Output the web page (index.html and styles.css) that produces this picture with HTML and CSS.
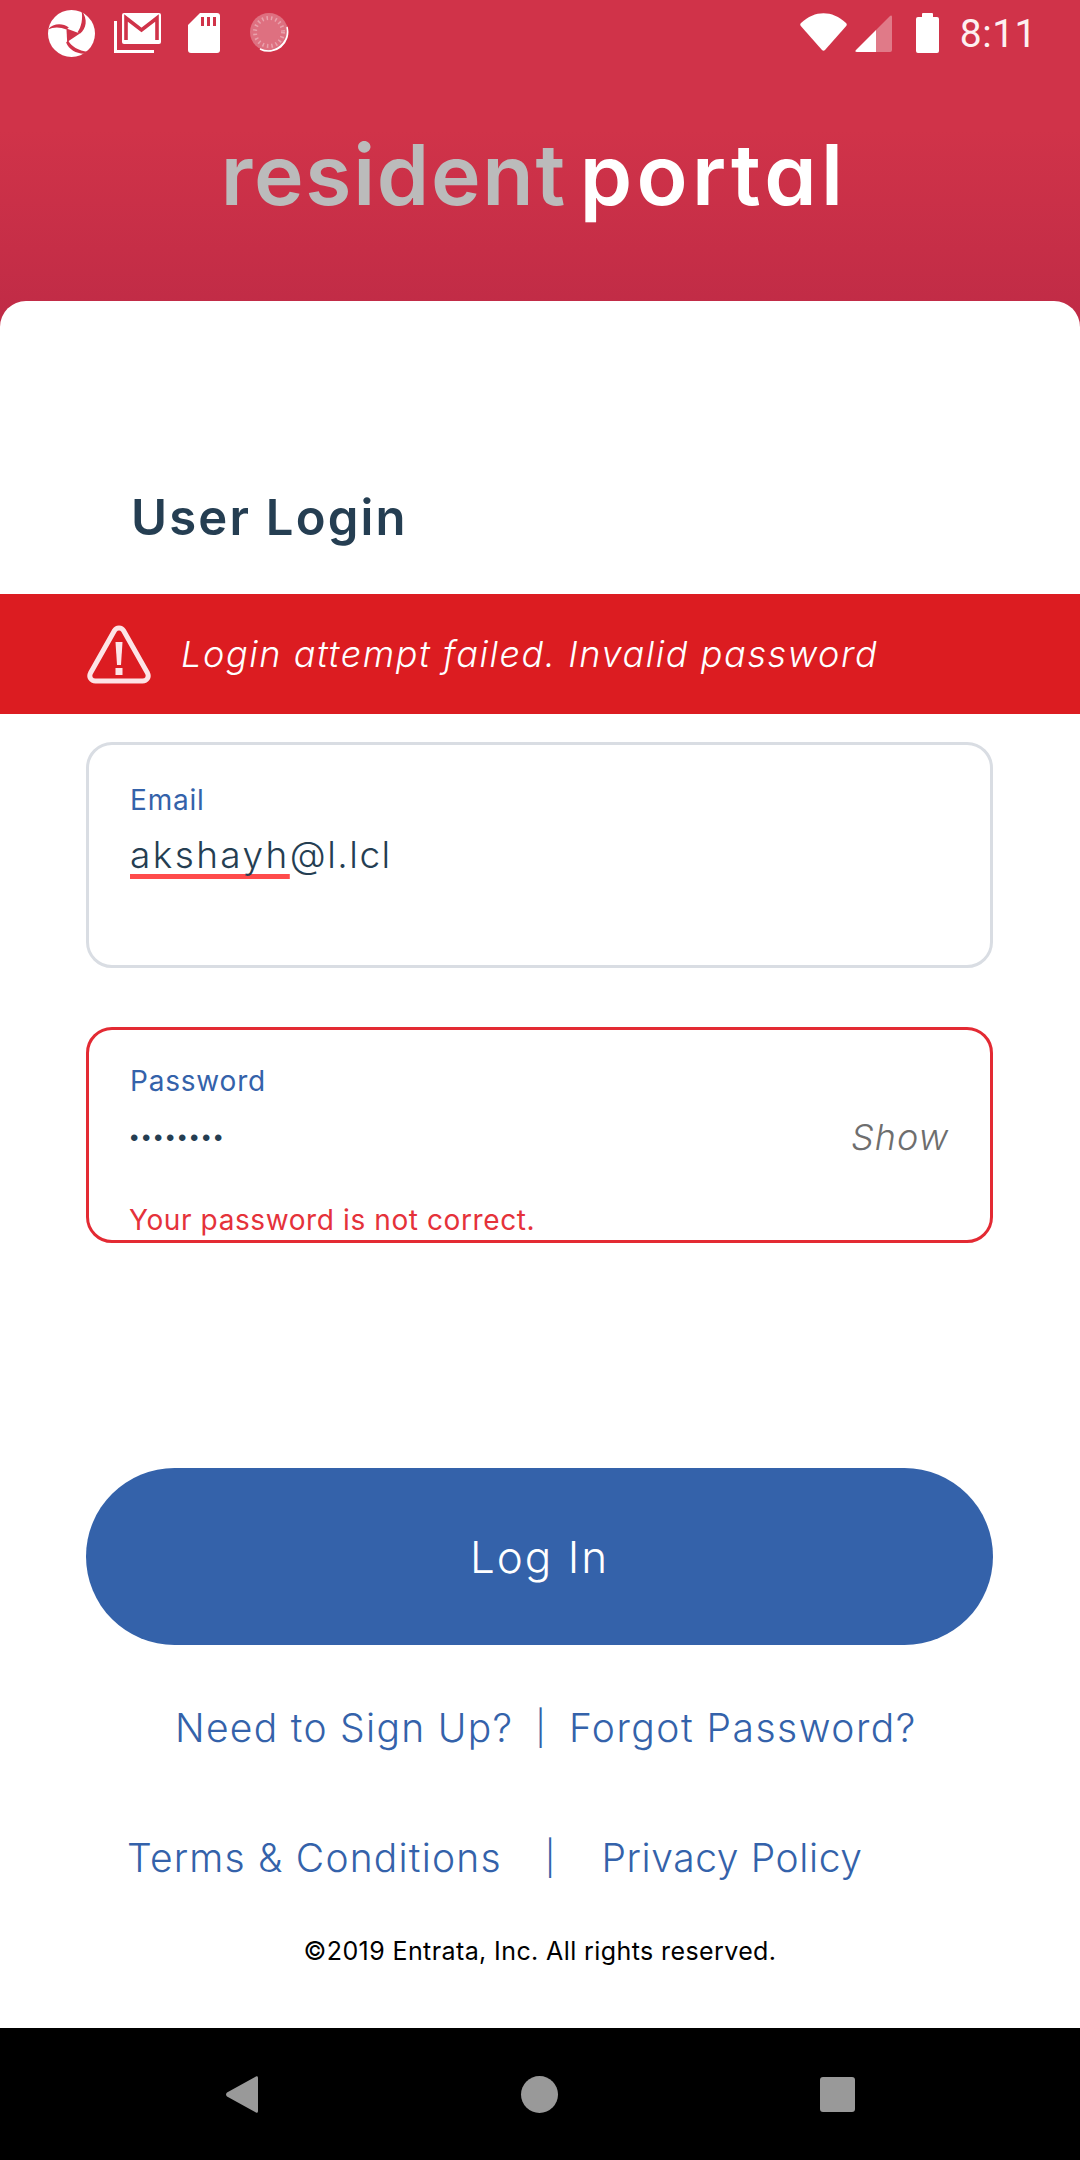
FILE: index.html
```html
<!DOCTYPE html>
<html lang="en">
<head>
<meta charset="utf-8">
<title>Resident Portal Login</title>
<link rel="stylesheet" href="styles.css">
</head>
<body>
<div class="app">
  <header class="top">
    <div class="status">
      <div class="status-left">
        <svg class="ic-swirl" viewBox="0 0 140 140"><circle cx="70" cy="70" r="70" fill="#fff"/><path fill="#d03349" d="M55 55L95 70L57 95Z"/><path fill="#d03349" d="M100 2C120 28 114 55 95 71L88 66C100 50 104 25 100 2Z"/><path fill="#d03349" d="M0 58C15 40 42 38 62 52L55 58C36 50 16 50 0 58Z"/><path fill="#d03349" d="M60 90C68 108 92 122 118 124L106 130C84 130 62 118 54 97Z"/></svg>
        <svg class="ic-gmail" viewBox="0 0 47 40"><path d="M1.5 8V38.5H40" fill="none" stroke="#fff" stroke-width="3"/><rect x="8" y="0" width="39" height="31" rx="2" fill="#fff"/><path d="M12 27V5L27.5 17L43 5V27" fill="none" stroke="#d03349" stroke-width="3.6"/></svg>
        <svg class="ic-sd" viewBox="0 0 32 40"><path d="M12 0H29a3 3 0 0 1 3 3V37a3 3 0 0 1-3 3H3a3 3 0 0 1-3-3V12Z" fill="#fff"/><path d="M13 4h3v9h-3zM19 4h3v9h-3zM25 4h3v9h-3z" fill="#d03349"/></svg>
        <svg class="ic-spin" viewBox="0 0 40 40"><circle cx="19" cy="19" r="19" fill="#fff" opacity=".3"/><circle cx="19" cy="19" r="14" fill="none" stroke="#fff" stroke-opacity=".35" stroke-width="4" stroke-dasharray="1.5 3"/><path d="M37 14A19 19 0 0 1 10 36A19.500 19.500 0 0 0 37 14Z" fill="#fff" stroke="#fff" stroke-width="1.500"/></svg>
      </div>
      <div class="status-right">
        <svg class="ic-wifi" viewBox="0 0 47 38"><path d="M1 10C15 -3 32 -3 46 10C47 11 47 12 46.200 13L25 37C24 38 23 38 22 37L.8 13C0 12 0 11 1 10Z" fill="#fff"/></svg>
        <svg class="ic-signal" viewBox="0 0 37 37"><path d="M21 15L35 1C36 0 37 .5 37 2V35a2 2 0 0 1-2 2H21Z" fill="#fff" opacity=".35"/><path d="M21 15V37H2C0 37 0 36 1 35Z" fill="#fff"/></svg>
        <svg class="ic-batt" viewBox="0 0 23 40"><path d="M6 4V1a1 1 0 0 1 1-1H16a1 1 0 0 1 1 1V4H21a2 2 0 0 1 2 2V38a2 2 0 0 1-2 2H2a2 2 0 0 1-2-2V6a2 2 0 0 1 2-2Z" fill="#fff"/></svg>
        <span class="clock">8:11</span>
      </div>
    </div>
    <div class="brand"><span class="brand-a">resident</span><span class="brand-b">portal</span></div>
  </header>

  <main class="card">
    <h1 class="title">User Login</h1>
    <div class="banner">
      <svg class="ic-warn" viewBox="0 0 66 60"><path d="M28.500 6.500C30.500 3 35.500 3 37.500 6.500L61.500 49C63.500 53 61 57 56.500 57H9.500C5 57 2.500 53 4.500 49Z" fill="none" stroke="#fde4e6" stroke-width="5" stroke-linejoin="round"/><path d="M29.500 18H36.500L35 41H31Z" fill="#fde4e6"/><rect x="29.500" y="44" width="7" height="7" fill="#fde4e6"/></svg>
      <span class="banner-text">Login attempt failed. Invalid password</span>
    </div>

    <div class="field field-email">
      <div class="label">Email</div>
      <div class="value"><span class="misspelt">akshayh</span>@l.lcl</div>
    </div>

    <div class="field field-pass">
      <div class="label">Password</div>
      <div class="pass-row">
        <span class="dots">••••••••</span>
        <span class="show">Show</span>
      </div>
      <div class="error">Your password is not correct.</div>
    </div>

    <button class="login">Log In</button>

    <div class="links links-a">
      <a class="need">Need to Sign Up?</a><span class="sep sep-a">|</span><a class="forgot">Forgot Password?</a>
    </div>
    <div class="links links-b">
      <a class="terms">Terms &amp; Conditions</a><span class="sep sep-b">|</span><a class="privacy">Privacy Policy</a>
    </div>
    <p class="copy">©2019 Entrata, Inc. All rights reserved.</p>
  </main>

  <nav class="navbar">
    <svg class="ic-back" viewBox="0 0 32 37"><path d="M30 .5C31 -.3 32 .3 32 2V35C32 36.700 31 37.300 30 36.500L1 20.500C-.3 19.500 -.3 17.500 1 16.500Z" fill="#999"/></svg>
    <span class="ic-home"></span>
    <span class="ic-recent"></span>
  </nav>
</div>
</body>
</html>
```
FILE: styles.css
```css
* { box-sizing: border-box; }
html, body { margin: 0; padding: 0; }
body { width: 1080px; height: 2160px; overflow: hidden; font-family: "Inter", "Noto Sans", sans-serif; background: #fff; }
.app { width: 1080px; height: 2160px; display: flex; flex-direction: column; background: linear-gradient(180deg, #d03349 0, #d03349 130px, #c02b46 320px) no-repeat; background-size: 1080px 340px; }

.top { height: 301px; flex: none; }
.status { height: 66px; display: flex; justify-content: space-between; }
.status-left { display: flex; align-items: flex-start; padding-left: 48px; }
.status-right { display: flex; align-items: flex-start; padding-right: 43px; }
.ic-swirl { width: 47px; height: 47px; margin-top: 10px; }
.ic-gmail { width: 47px; height: 40px; margin: 13px 0 0 19px; }
.ic-sd { width: 32px; height: 40px; margin: 13px 0 0 27px; }
.ic-spin { width: 40px; height: 40px; margin: 13px 0 0 30px; }
.ic-wifi { width: 47px; height: 38px; margin-top: 13px; }
.ic-signal { width: 37px; height: 37px; margin: 15px 0 0 8px; }
.ic-batt { width: 23px; height: 40px; margin: 13px 0 0 24px; }
.clock { font-family: "Roboto", sans-serif; font-size: 39px; font-weight: 400; line-height: 40px; color: #fdf0f1; margin: 14px 0 0 21px; letter-spacing: 0.5px; }

.brand { display: flex; justify-content: center; padding: 59px 12px 0 0; font-family: "Inter", sans-serif; font-size: 84px; font-weight: 600; line-height: 100px; font-feature-settings: "cv11" 1; }
.brand-a { color: #bbbbbb; letter-spacing: 1.7px; }
.brand-b { color: #ffffff; margin-left: 13px; letter-spacing: 4.3px; }

.card { flex: 1; background: #fff; border-radius: 26px 26px 0 0; display: flex; flex-direction: column; }
.title { margin: 182px 0 0 131px; height: 111px; font-size: 49px; font-weight: 600; line-height: 70px; color: #253e52; letter-spacing: 2.2px; }
.banner { height: 120px; background: #dc1c21; display: flex; align-items: center; padding-left: 86px; }
.ic-warn { width: 66px; height: 60px; flex: none; }
.banner-text { margin-left: 29px; font-size: 36px; font-style: italic; font-weight: 300; color: #fff; white-space: nowrap; letter-spacing: 1.6px; }

.field { margin: 0 87px 0 86px; border-radius: 26px; background: #fff; padding: 0 41px; }
.field-email { margin-top: 28px; height: 226px; border: 3px solid #d9dde3; padding-top: 35px; }
.field-pass { margin-top: 59px; height: 216px; border: 3px solid #e32a33; padding-top: 31px; }
.label { font-size: 28px; line-height: 40px; color: #3462aa; font-weight: 400; letter-spacing: 0.8px; }
.value { margin-top: 10px; font-size: 37px; line-height: 50px; color: #253e52; font-weight: 300; white-space: nowrap; letter-spacing: 1.5px; }
.misspelt { letter-spacing: 2.4px; text-decoration: underline #ff4b4b 5px; text-underline-offset: 6px; text-decoration-skip-ink: none; }
.pass-row { display: flex; justify-content: space-between; align-items: center; margin-top: 12px; height: 50px; }
.dots { font-size: 24px; color: #253e52; letter-spacing: 3.6px; font-family: "Liberation Sans", sans-serif; }
.show { font-size: 36px; font-style: italic; font-weight: 300; color: #6e6e6e; margin: -2px 0 0; letter-spacing: 1px; }
.error { margin: 37px 0 0 -1px; font-size: 28px; line-height: 40px; color: #e5323a; font-weight: 400; white-space: nowrap; letter-spacing: 0.6px; }

.login { display: block; margin: 225px 87px 0 86px; height: 177px; border: 0; border-radius: 89px; background: #3462aa; color: #fff; font-family: inherit; font-size: 44px; font-weight: 300; letter-spacing: 2px; }

.links { display: flex; align-items: center; color: #3462aa; font-size: 39px; font-weight: 300; white-space: nowrap; line-height: 50px; }
.links-a { margin-top: 58px; padding-left: 175px; }
.links-b { margin-top: 80px; padding-left: 127px; }
.need { letter-spacing: 1.3px; }
.forgot { letter-spacing: 1.5px; }
.terms { letter-spacing: 1.2px; }
.privacy { letter-spacing: 0.6px; }
.sep { font-size: 34px; }
.sep-a { margin: 0 23px 0 22px; }
.sep-b { margin: 0 46px 0 43px; }
.copy { margin: 50px 0 0; text-align: center; font-size: 25px; line-height: 36px; color: #000; font-weight: 400; letter-spacing: 0.4px; }

.navbar { flex: none; margin-top: auto; height: 132px; background: #000; display: flex; align-items: center; padding: 0 225px 0 226px; justify-content: space-between; }
.ic-back { width: 32px; height: 37px; }
.ic-home { width: 37px; height: 37px; border-radius: 50%; background: #999; }
.ic-recent { width: 35px; height: 35px; border-radius: 3px; background: #999; }
```
